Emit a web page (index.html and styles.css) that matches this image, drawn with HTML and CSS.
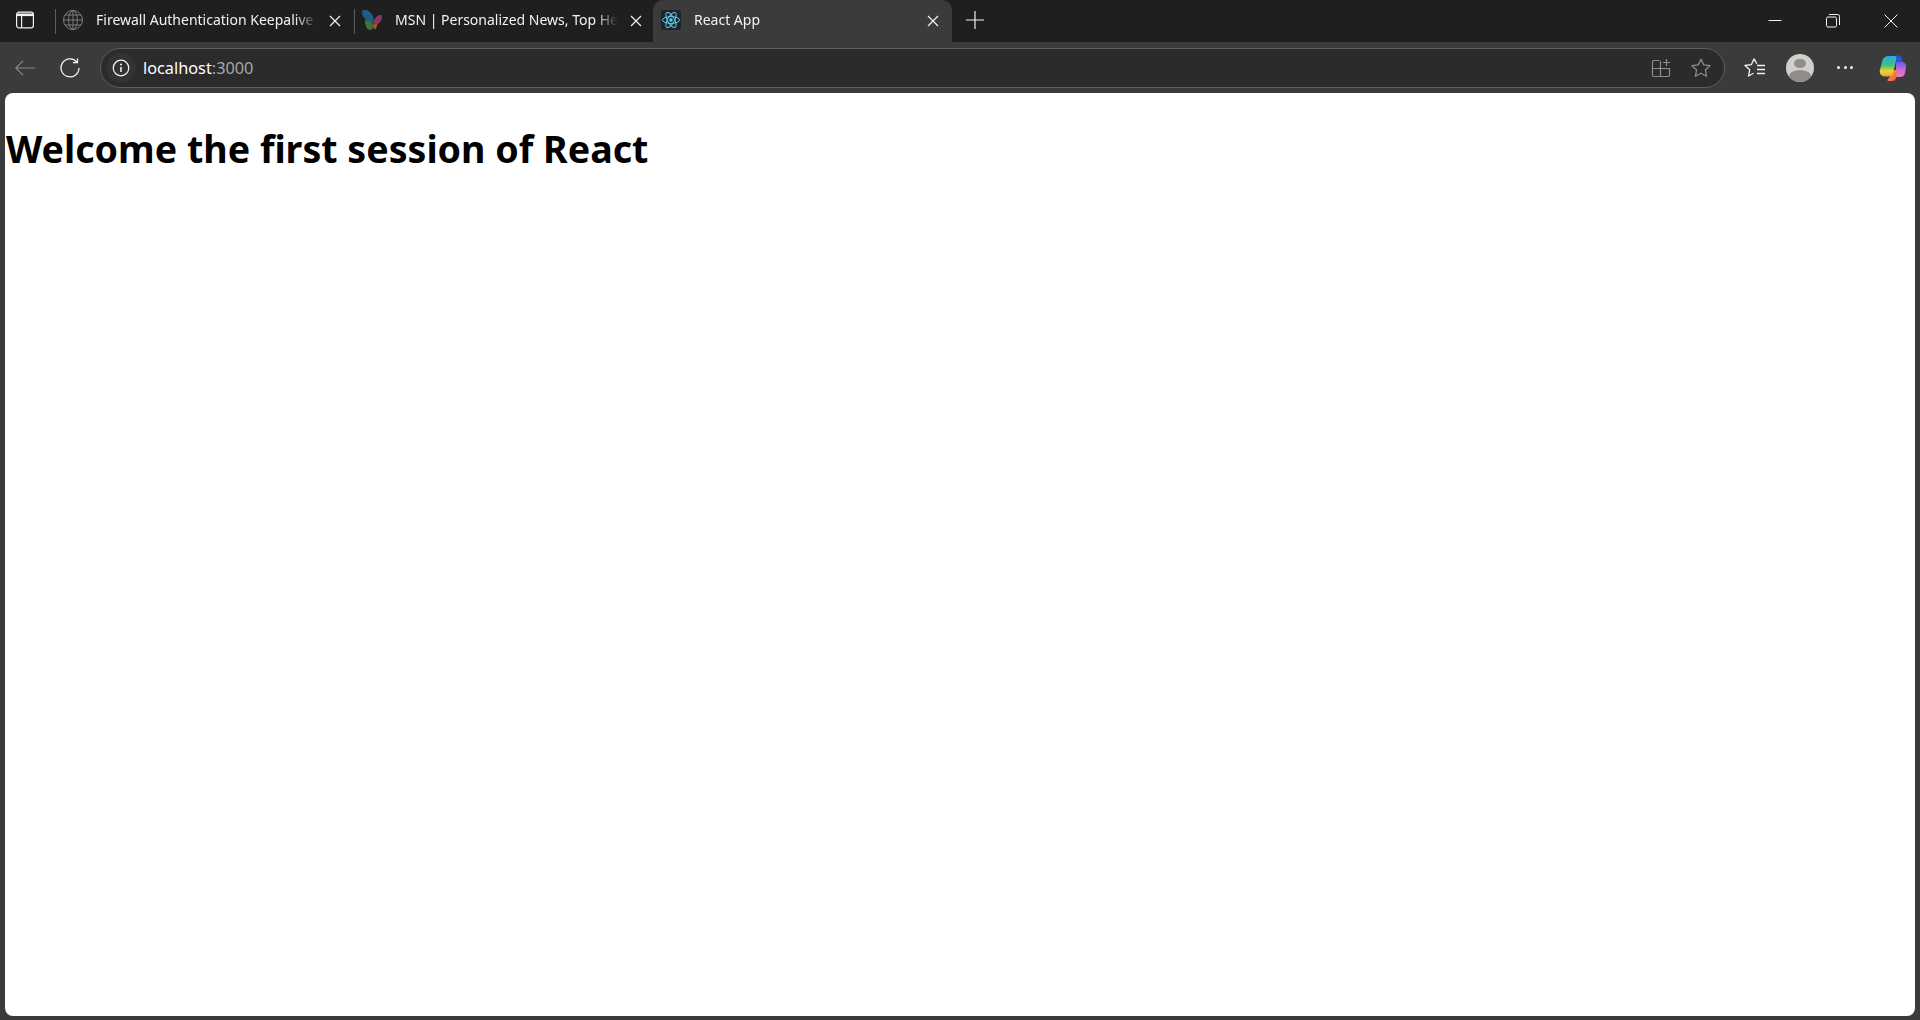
FILE: index.html
```html
<!DOCTYPE html>
<html lang="en">

<head>
    <meta charset="UTF-8">
    <meta name="viewport" content="width=device-width, initial-scale=1.0">
    <title>React App</title>
    <link rel="stylesheet" href="styles.css">
</head>

<body>
    <!-- tab strip -->
    <div class="tabstrip">
        <div class="strip-btn">
            <svg width="20" height="20" viewBox="0 0 20 20" fill="none" stroke="#f2f2f2" stroke-width="1.2">
                <rect x="1.6" y="2.1" width="16.8" height="15.8" rx="2.4" />
                <path d="M2 3.5h16v2.6H2z" fill="#f2f2f2" stroke="none" />
                <path d="M6.6 5.5v12" />
            </svg>
        </div>
        <div class="tab">
            <svg class="favicon" viewBox="0 0 20 20" fill="none" stroke="#7d7d7d" stroke-width="1">
                <circle cx="10" cy="10" r="9.5" />
                <ellipse cx="10" cy="10" rx="4.4" ry="9.5" />
                <path d="M10 .5v19M.5 10h19M2 5h16M2 15h16" />
            </svg>
            <span class="tab-title">Firewall Authentication Keepalive</span>
            <svg class="tab-close" viewBox="0 0 12 12" stroke="#f2f2f2" stroke-width="1.2">
                <path d="M1 1l10 10M11 1L1 11" />
            </svg>
        </div>
        <div class="tab">
            <svg class="favicon" viewBox="0 0 20 20">
                <path d="M0 2C0 0 2 -.5 4 0c4 1 7 4 7.500 8 .2 2 0 4-.5 6C7 12 0 9 0 2z" fill="#1b5f7e" />
                <path d="M3 10c3 0 6 2 8 4.500.5 2.500-.5 5.500-3 5.500-3 0-5.500-5-5-10z" fill="#3f7436" />
                <path d="M11.500 12c.5-3.500 3-6 6.500-7 1.500-.3 2.200.7 2 2.200-.5 3.800-3 7-6.500 7.800-1.500.2-2.300-1.300-2-3z" fill="#8a3560" />
                <path d="M11.500 14.500c1-.8 2.500-.8 3.500-.3.3 1.800-.7 4.800-2.300 5-1.400-.2-1.900-3-1.200-4.700z" fill="#a35c2c" />
            </svg>
            <span class="tab-title">MSN | Personalized News, Top He</span>
            <svg class="tab-close" viewBox="0 0 12 12" stroke="#f2f2f2" stroke-width="1.2">
                <path d="M1 1l10 10M11 1L1 11" />
            </svg>
        </div>
        <div class="tab tab-active">
            <svg class="favicon" viewBox="0 0 20 20" fill="none" stroke="#5ccfee" stroke-width="1">
                <rect width="20" height="20" rx="2" fill="#20232a" stroke="none" />
                <circle cx="10" cy="10" r="1.8" fill="#5ccfee" stroke="none" />
                <ellipse cx="10" cy="10" rx="8.5" ry="3.4" />
                <ellipse cx="10" cy="10" rx="8.5" ry="3.4" transform="rotate(60 10 10)" />
                <ellipse cx="10" cy="10" rx="8.5" ry="3.4" transform="rotate(120 10 10)" />
            </svg>
            <span class="tab-title">React App</span>
            <svg class="tab-close" viewBox="0 0 12 12" stroke="#f2f2f2" stroke-width="1.2">
                <path d="M1 1l10 10M11 1L1 11" />
            </svg>
        </div>
        <div class="new-tab">
            <svg width="18" height="18" viewBox="0 0 18 18" stroke="#f2f2f2" stroke-width="1.2">
                <path d="M9 0v18M0 9h18" />
            </svg>
        </div>
        <div class="window-btns">
            <svg class="win-btn" viewBox="0 0 14 14" stroke="#f2f2f2" fill="none">
                <path d="M.5 6.5h13" />
            </svg>
            <svg class="win-btn" viewBox="0 0 14 14" stroke="#f2f2f2" fill="none">
                <rect x=".5" y="3" width="10" height="10" rx="1.5" />
                <path d="M3 .5h8.500a2 2 0 0 1 2 2V11" />
            </svg>
            <svg class="win-btn" viewBox="0 0 14 14" stroke="#f2f2f2" fill="none">
                <path d="M.5.5l13 13M13.500.5l-13 13" />
            </svg>
        </div>
    </div>

    <!-- toolbar -->
    <div class="toolbar">
        <svg class="tool-back" viewBox="0 0 20 16" stroke="#8a8a8a" stroke-width="1.2" fill="none">
            <path d="M20 8H.8M8 .8L.8 8 8 15.2" />
        </svg>
        <svg class="tool-reload" viewBox="0 0 20 20" stroke="#f2f2f2" stroke-width="1.3" fill="none">
            <path d="M16.900 4.100A9 9 0 1 0 19 10" />
            <path d="M17.500 .5v4.200h-4.600" />
        </svg>
        <div class="address">
            <div class="site-info">
                <svg width="18" height="18" viewBox="0 0 16 16" stroke="#f2f2f2" stroke-width="1.1" fill="none">
                    <circle cx="8" cy="8" r="6.9" />
                    <path d="M8 7v4.500" stroke-width="1.4" />
                    <circle cx="8" cy="4.8" r=".9" fill="#f2f2f2" stroke="none" />
                </svg>
            </div>
            <span class="url">localhost<span class="url-port">:3000</span></span>
            <svg class="addr-icon" viewBox="0 0 20 20" stroke="#8c8c8c" stroke-width="1.2" fill="none">
                <path d="M8.500 2.500H3a1.500 1.500 0 0 0-1.500 1.500v13A1.500 1.500 0 0 0 3 18.500h14a1.500 1.500 0 0 0 1.500-1.500V10.500H1.500M9.500 3v15.500" />
                <path d="M15.500 1v7M12 4.500h7" />
            </svg>
            <svg class="addr-icon addr-star" viewBox="0 0 20 20" stroke="#8c8c8c" stroke-width="1.3" fill="none" stroke-linejoin="round">
                <path d="M10 1.200l2.700 5.700 6.300.8-4.600 4.300 1.200 6.200-5.600-3-5.600 3 1.200-6.200L1 7.700l6.300-.8z" />
            </svg>
        </div>
        <svg class="tool-favs" viewBox="0 0 22 20" stroke="#f2f2f2" stroke-width="1.3" fill="none" stroke-linejoin="round">
            <path d="M12.800 5.600L10 .9 7.400 6.600 1 7.500l4.700 4.300L4.500 18l5-2.700" />
            <path d="M13 7.500h8M13 11.500h8M13 15.500h8" />
        </svg>
        <div class="avatar">
            <div class="avatar-head"></div>
            <div class="avatar-body"></div>
        </div>
        <div class="more">
            <span class="dot"></span>
            <span class="dot"></span>
            <span class="dot"></span>
        </div>
        <svg class="copilot" viewBox="0 0 28 28">
            <defs>
                <linearGradient id="copLeft" x1="0" y1="0" x2="0" y2="1">
                    <stop offset="0" stop-color="#2aa6e8" />
                    <stop offset=".45" stop-color="#3ec46f" />
                    <stop offset=".75" stop-color="#f2d13c" />
                    <stop offset="1" stop-color="#f0a030" />
                </linearGradient>
                <linearGradient id="copRight" x1="0" y1="0" x2="0" y2="1">
                    <stop offset="0" stop-color="#5a5ce8" />
                    <stop offset=".5" stop-color="#c268e0" />
                    <stop offset="1" stop-color="#f07ab8" />
                </linearGradient>
                <linearGradient id="copBottom" x1="0" y1="0" x2="1" y2="1">
                    <stop offset="0" stop-color="#f9b040" />
                    <stop offset="1" stop-color="#f0503c" />
                </linearGradient>
            </defs>
            <path d="M17 7.500h5c3.500 0 5.500 2.500 5 6l-.8 5c-.5 3-2.500 4.500-5.200 4.500h-4z" fill="url(#copRight)" />
            <path d="M13 18l2.500-2h3l-1.500 8c-.4 2-1.800 3-3.800 3H9.500c-1.500 0-1-1.500-.5-2 2-1.500 3.200-4.500 4-7z" fill="url(#copBottom)" />
            <path d="M10 2h11c-2.500 1-3.500 3-4 5l-3 12c-.5 2-2 3.500-4.500 3.500H6c-4 0-6-3-5-7l1.800-7C3.800 4 6 2 10 2z" fill="url(#copLeft)" />
            <path d="M17 1.500h2.500c1.800 0 3 1 3.300 3l.4 3H17.500z" fill="#2456d8" />
        </svg>
    </div>

    <!-- page -->
    <main class="page">
        <h1 class="heading">Welcome the first session of React</h1>
    </main>
</body>

</html>
```

FILE: styles.css
```css
* {
    box-sizing: border-box;
}

body {
    margin: 0;
    height: 100vh;
    display: flex;
    flex-direction: column;
    background-color: #3b3b3b;
    font-family: "Noto Sans", "Open Sans", sans-serif;
    overflow: hidden;
}

svg {
    flex-shrink: 0;
    display: block;
}

/* tab strip */
.tabstrip {
    height: 42px;
    flex-shrink: 0;
    display: flex;
    background-color: #1f1f1f;
    color: #f2f2f2;
}

.strip-btn {
    width: 55px;
    padding: 10px 0 0 15px;
}

.tab {
    width: 299px;
    height: 42px;
    padding: 0 8px 0 8px;
    display: flex;
    align-items: center;
    position: relative;
}

/* separator is shorter than the tab */
.tab::before {
    content: "";
    position: absolute;
    left: 0;
    top: 9px;
    width: 1px;
    height: 25px;
    background-color: #5e5e5e;
}

.tab-active {
    height: 48px;
    border-radius: 10px 10px 0 0;
    background-color: #3b3b3b;
}

.tab-active::before {
    display: none;
}

.favicon {
    width: 20px;
    height: 20px;
    margin-top: -2px;
}

.tab-active .favicon {
    margin-top: -8px;
}

.tab-title {
    flex: 1;
    margin-left: 13px;
    font-size: 14px;
    line-height: 20px;
    margin-top: -3px;
    white-space: nowrap;
    -webkit-mask-image: linear-gradient(to right, #000 90%, transparent 100%);
    mask-image: linear-gradient(to right, #000 90%, transparent 100%);
}

.tab-active .tab-title {
    margin-top: -9px;
}

.tab-close {
    width: 12px;
    height: 12px;
    margin: -1px 5px 0 12px;
}

.tab-active .tab-close {
    margin-top: -7px;
}

.new-tab {
    padding: 11px 0 0 14px;
    width: 40px;
}

.window-btns {
    margin-left: auto;
    display: flex;
    gap: 44px;
    padding: 14px 22px 0 0;
}

.win-btn {
    width: 14px;
    height: 14px;
}

/* toolbar */
.toolbar {
    height: 51px;
    flex-shrink: 0;
    display: flex;
    align-items: center;
    background-color: #3b3b3b;
    position: relative;
}

.tool-back {
    width: 20px;
    height: 16px;
    margin-left: 15px;
}

.tool-reload {
    width: 20px;
    height: 20px;
    margin-left: 25px;
}

.address {
    width: 1625px;
    height: 40px;
    margin-left: 20px;
    display: flex;
    align-items: center;
    padding: 0 12px 0 5px;
    border: 1px solid #5e5e5e;
    border-radius: 20px;
    background-color: #2b2b2b;
}

.site-info {
    width: 30px;
    height: 30px;
    border-radius: 50%;
    background-color: #333333;
    display: flex;
    align-items: center;
    justify-content: center;
}

.url {
    flex: 1;
    margin-left: 7px;
    font-size: 16.3px;
    color: #ffffff;
}

.url-port {
    color: #a6a6a6;
}

.addr-icon {
    width: 20px;
    height: 20px;
}

.addr-star {
    margin: 0 1px 0 20px;
}

.tool-favs {
    width: 22px;
    height: 20px;
    margin-left: 19px;
}

.avatar {
    width: 28px;
    height: 28px;
    margin-left: 20px;
    border-radius: 50%;
    background-color: #d0cfcb;
    overflow: hidden;
    display: flex;
    flex-direction: column;
    align-items: center;
}

.avatar-head {
    width: 12px;
    height: 12px;
    margin-top: 5px;
    border-radius: 50%;
    background-color: #918e8a;
}

.avatar-body {
    width: 22px;
    height: 14px;
    margin-top: 2px;
    border-radius: 50%;
    background-color: #918e8a;
}

.more {
    width: 16px;
    margin-left: 23px;
    display: flex;
    justify-content: space-between;
}

.dot {
    width: 3px;
    height: 3px;
    border-radius: 50%;
    background-color: #f2f2f2;
}

.copilot {
    width: 28px;
    height: 28px;
    margin-left: 26px;
}

/* page */
.page {
    flex: 1;
    margin: 0 5px 4px;
    border-radius: 8px;
    background-color: #ffffff;
}

.heading {
    margin: 30px 0 0;
    padding-left: 1px;
    font-size: 37.6px;
    font-weight: 700;
    color: #000000;
}
```
